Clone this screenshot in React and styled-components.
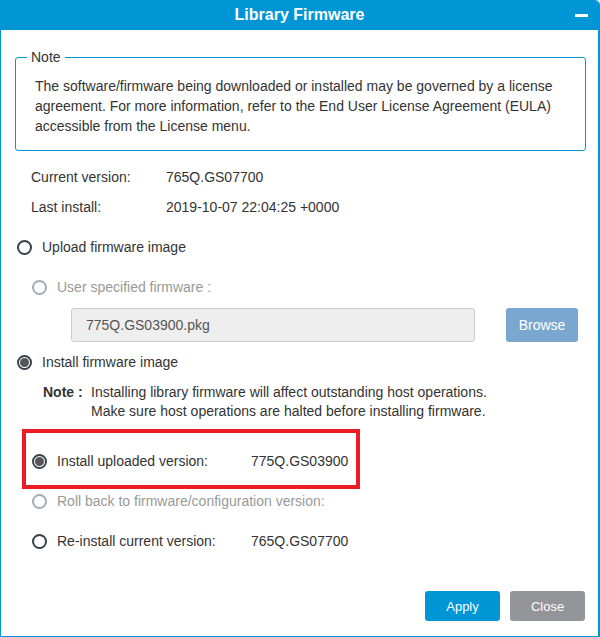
import React from "react";
import styled, { createGlobalStyle } from "styled-components";

const Global = createGlobalStyle`
  html, body { margin: 0; padding: 0; background: #fff; }
  body { font-family: "Liberation Sans", Arial, sans-serif; font-size: 14px; color: #333; }
  * { box-sizing: border-box; }
`;

const BLUE = "#0096d6";

const Dialog = styled.div`
  width: 600px;
  height: 637px;
  display: flex;
  flex-direction: column;
  background: #fff;
  border-left: 1px solid ${BLUE};
  border-right: 2px solid ${BLUE};
  border-bottom: 1px solid ${BLUE};
  border-top-right-radius: 5px;
  overflow: hidden;
`;

const Header = styled.div`
  height: 30px;
  flex: none;
  background: ${BLUE};
  display: grid;
  grid-template-columns: 1fr auto 1fr;
  align-items: center;
`;

const Title = styled.div`
  grid-column: 2;
  color: #fff;
  font-weight: bold;
  font-size: 16px;
`;

const Minimize = styled.button`
  grid-column: 3;
  justify-self: end;
  margin-right: 10px;
  width: 13px;
  height: 3px;
  padding: 0;
  border: none;
  background: #fff;
  margin-top: 1px;
`;

const Content = styled.div`
  flex: 1;
  padding: 17px 12px 0 14px;
  display: flex;
  flex-direction: column;
`;

const NoteBox = styled.fieldset`
  margin: 0;
  padding: 9px 18px 14px 19px;
  border: 1px solid ${BLUE};
  border-radius: 3px;
  line-height: 20px;
`;

const Legend = styled.legend`
  margin-left: -8px;
  padding: 0 4px;
  line-height: 20px;
`;

const InfoGrid = styled.div`
  margin: 16px 0 0 16px;
  display: grid;
  grid-template-columns: 135px auto;
  row-gap: 10px;
  line-height: 20px;
`;

const RadioRow = styled.label`
  display: flex;
  align-items: center;
  height: 20px;
  margin-top: ${(p) => p.$mt || 0}px;
  padding-left: ${(p) => p.$indent || 0}px;
  color: ${(p) => (p.$disabled ? "#999" : "#333")};
`;

const Circle = styled.span`
  flex: none;
  width: 15px;
  height: 15px;
  border-radius: 50%;
  border: 2px solid ${(p) => (p.$disabled ? "#a3adb4" : "#34424b")};
  margin-right: 10px;
  display: flex;
  align-items: center;
  justify-content: center;
  background: #fff;
  &::after {
    content: "";
    display: ${(p) => (p.$checked ? "block" : "none")};
    width: 9px;
    height: 9px;
    border-radius: 50%;
    background: #555;
  }
`;

const RadioLabel = styled.span`
  width: ${(p) => (p.$w ? `${p.$w}px` : "auto")};
  flex: none;
`;

const FileRow = styled.div`
  margin: 11px 0 0 56px;
  display: flex;
  gap: 31px;
`;

const FileInput = styled.div`
  width: 404px;
  height: 34px;
  background: #eee;
  border: 1px solid #ccc;
  border-radius: 3px;
  padding-left: 14px;
  display: flex;
  align-items: center;
  color: #555;
`;

const Button = styled.button`
  width: ${(p) => p.$w || 75}px;
  height: ${(p) => p.$h || 30}px;
  border: none;
  border-radius: 3px;
  color: #fff;
  font-family: "Liberation Sans", Arial, sans-serif;
  font-size: ${(p) => p.$fs || 13}px;
  background: ${(p) => p.$bg};
  padding: 0;
`;

const NoteGrid = styled.div`
  margin: 11px 0 0 28px;
  display: grid;
  grid-template-columns: 48px auto;
  line-height: 19px;
`;

const Bold = styled.span`
  font-weight: bold;
`;

const Highlight = styled.div`
  margin: 8px 0 0 7px;
  width: 338px;
  height: 60px;
  border: 4px solid #ed1c24;
  padding: 18px 0 0 6px;
`;

const Footer = styled.div`
  flex: none;
  display: flex;
  justify-content: flex-end;
  gap: 10px;
  padding: 0 13px 15px 0;
`;

export default function App() {
  return (
    <>
      <Global />
      <Dialog>
        <Header>
          <Title>Library Firmware</Title>
          <Minimize aria-label="minimize" />
        </Header>
        <Content>
          <NoteBox>
            <Legend>Note</Legend>
            The software/firmware being downloaded or installed may be governed by a license
            agreement. For more information, refer to the End User License Agreement (EULA)
            accessible from the License menu.
          </NoteBox>

          <InfoGrid>
            <span>Current version:</span>
            <span>765Q.GS07700</span>
            <span>Last install:</span>
            <span>2019-10-07 22:04:25 +0000</span>
          </InfoGrid>

          <RadioRow $mt={20} $indent={2}>
            <Circle />
            <RadioLabel>Upload firmware image</RadioLabel>
          </RadioRow>

          <RadioRow $mt={20} $indent={17} $disabled>
            <Circle $disabled />
            <RadioLabel>User specified firmware :</RadioLabel>
          </RadioRow>

          <FileRow>
            <FileInput>775Q.GS03900.pkg</FileInput>
            <Button $w={72} $h={34} $fs={14} $bg="#7aa7d0">Browse</Button>
          </FileRow>

          <RadioRow $mt={10} $indent={2}>
            <Circle $checked />
            <RadioLabel>Install firmware image</RadioLabel>
          </RadioRow>

          <NoteGrid>
            <Bold>Note :</Bold>
            <span>
              Installing library firmware will affect outstanding host operations.
              <br />
              Make sure host operations are halted before installing firmware.
            </span>
          </NoteGrid>

          <Highlight>
            <RadioRow>
              <Circle $checked />
              <RadioLabel $w={194}>Install uploaded version:</RadioLabel>
              <span>775Q.GS03900</span>
            </RadioRow>
          </Highlight>

          <RadioRow $mt={2} $indent={17} $disabled>
            <Circle $disabled />
            <RadioLabel>Roll back to firmware/configuration version:</RadioLabel>
          </RadioRow>

          <RadioRow $mt={20} $indent={17}>
            <Circle />
            <RadioLabel $w={194}>Re-install current version:</RadioLabel>
            <span>765Q.GS07700</span>
          </RadioRow>
        </Content>
        <Footer>
          <Button $bg={BLUE}>Apply</Button>
          <Button $bg="#939598">Close</Button>
        </Footer>
      </Dialog>
    </>
  );
}
